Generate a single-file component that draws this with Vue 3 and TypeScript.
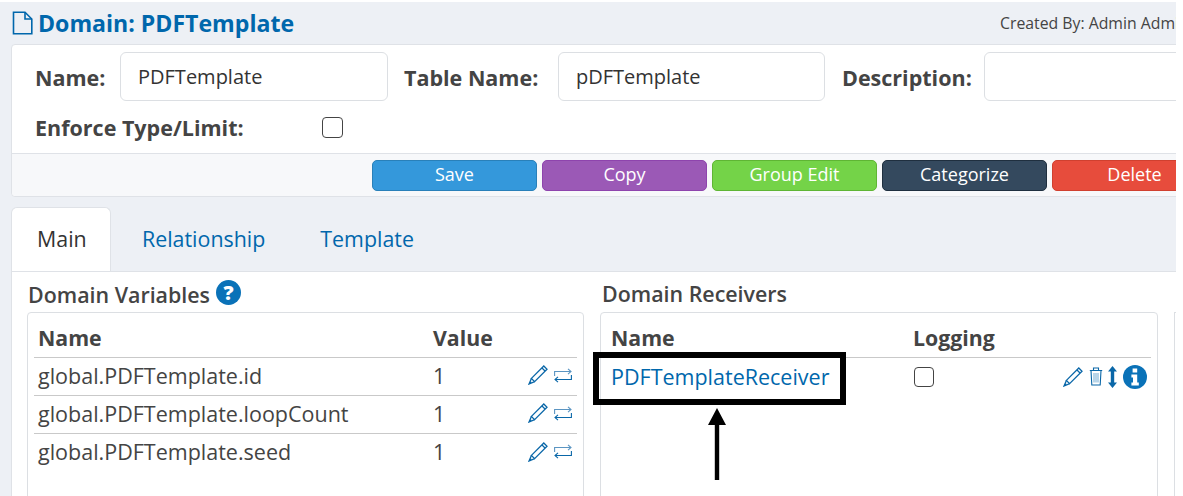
<script setup lang="ts">
const buttons = [
  { label: 'Save', cls: 'save' },
  { label: 'Copy', cls: 'copy' },
  { label: 'Group Edit', cls: 'group' },
  { label: 'Categorize', cls: 'cat' },
  { label: 'Delete', cls: 'del' },
]
const variables = ['global.PDFTemplate.id', 'global.PDFTemplate.loopCount', 'global.PDFTemplate.seed']
</script>

<template>
  <div class="viewport">
    <div class="page">
      <header class="head">
        <h1 class="title">
          <svg class="doc" width="21" height="24" viewBox="0 0 21 24" fill="none" stroke="#0067ac" stroke-width="1.6">
            <path d="M1.5 1.2H13L19.8 8V22.8H1.5Z" />
            <path d="M13 1.2V8H19.8" />
          </svg>
          Domain: PDFTemplate
        </h1>
        <div class="created">Created By: Admin Admin</div>
      </header>

      <section class="card">
        <div class="card-body">
          <div class="row">
            <label class="lbl lbl-name">Name:</label>
            <div class="input i1">PDFTemplate</div>
            <label class="lbl lbl-table">Table Name:</label>
            <div class="input i2">pDFTemplate</div>
            <label class="lbl lbl-desc">Description:</label>
            <div class="input i3"></div>
          </div>
          <div class="row2">
            <label class="lbl lbl-enforce">Enforce Type/Limit:</label>
            <span class="check"></span>
          </div>
        </div>
        <div class="card-foot">
          <button v-for="b in buttons" :key="b.label" class="btn" :class="b.cls">{{ b.label }}</button>
        </div>
      </section>

      <nav class="tabs">
        <a class="tab active">Main</a>
        <a class="tab">Relationship</a>
        <a class="tab">Template</a>
      </nav>

      <section class="pane">
        <div class="col col-l">
          <h2 class="sub">
            Domain Variables
            <span class="help">?</span>
          </h2>
          <div class="box">
            <div class="thead">
              <span class="c-name">Name</span>
              <span class="c-val">Value</span>
            </div>
            <div v-for="(v, i) in variables" :key="v" class="tr" :class="{ last: i === variables.length - 1 }">
              <span class="c-name">{{ v }}</span>
              <span class="c-val">1</span>
              <span class="acts">
                <svg width="20" height="20" viewBox="0 0 20 20" fill="none" stroke="#0a67a8" stroke-width="1.3">
                  <path d="M15.8 1 19 4.2 6.6 16.6 3.4 13.4Z" />
                  <path d="M3.4 13.4 1 19l5.6-2.4" />
                  <path d="M14 3 17 6" />
                  <path d="M2 17l1 1" stroke-width="2.2" />
                </svg>
                <svg width="18" height="15" viewBox="0 0 18 15" fill="none" stroke="#0a67a8" stroke-width="1.1">
                  <path d="M.6 8V3.5H17M14 .8 17 3.5 14 6.2" stroke="#5b95c2" />
                  <path d="M17.4 7V11.5H1M4 8.8 1 11.5 4 14.2" />
                </svg>
              </span>
            </div>
          </div>
        </div>

        <div class="col col-r">
          <h2 class="sub">Domain Receivers</h2>
          <div class="box box-r">
            <div class="thead">
              <span class="r-name">Name</span>
              <span class="r-log">Logging</span>
            </div>
            <div class="tr tr-r">
              <a class="r-name link">PDFTemplateReceiver</a>
              <span class="r-log"><span class="check small"></span></span>
              <span class="acts acts-r">
                <svg width="20" height="20" viewBox="0 0 20 20" fill="none" stroke="#0a67a8" stroke-width="1.3">
                  <path d="M15.8 1 19 4.2 6.6 16.6 3.4 13.4Z" />
                  <path d="M3.4 13.4 1 19l5.6-2.4" />
                  <path d="M14 3 17 6" />
                  <path d="M2 17l1 1" stroke-width="2.2" />
                </svg>
                <svg class="trash" width="14" height="19" viewBox="0 0 14 19" fill="none" stroke="#0a67a8" stroke-width="1.1">
                  <path d="M.8 3.5H13.2M4.5 3.5V1H9.5V3.5" />
                  <path d="M2 3.5 2.8 18H11.2L12 3.5" />
                  <path d="M5 6V15.5M7 6V15.5M9 6V15.5" stroke="#7fb2d6" />
                </svg>
                <svg width="9" height="22" viewBox="0 0 9 22">
                  <path d="M4.5 0 9 5.5H6.2V16.5H9L4.5 22 0 16.5H2.8V5.5H0Z" fill="#0a67a8" />
                </svg>
                <svg class="info" width="24" height="24" viewBox="0 0 24 24">
                  <circle cx="12" cy="12" r="12" fill="#0a72b8" />
                  <path d="M9.6 3.6h4.6v4H9.6ZM8.4 9.6h5.8v8h1.6v3H8.4v-3h1.6v-5H8.4Z" fill="#fff" />
                </svg>
              </span>
            </div>
          </div>
          <div class="callout"></div>
          <svg class="arrow" width="20" height="72" viewBox="0 0 20 72">
            <path d="M10 0 19 17H12.2V72H7.8V17H1Z" fill="#000" />
          </svg>
        </div>

        <div class="col-x"></div>
      </section>
    </div>
  </div>
</template>

<style>
html, body { margin: 0; background: #fff; }
</style>

<style scoped>
.viewport {
  width: 1183px;
  height: 496px;
  overflow: hidden;
  background: #fff;
  font-family: "Open Sans", "Noto Sans", sans-serif;
  color: #444;
}
.page {
  width: 1176px;
  height: 494px;
  margin-top: 2px;
  background: #edf0f5;
  overflow: hidden;
}
.head {
  display: flex;
  justify-content: space-between;
  height: 42px;
  padding-left: 12px;
  box-sizing: border-box;
  width: 1230px;
}
.title {
  margin: 0;
  display: flex;
  align-items: center;
  gap: 5px;
  height: 42px;
  font-size: 23.1px;
  font-weight: 700;
  color: #0067ac;
  white-space: nowrap;
}
.created {
  flex: none;
  width: 230px;
  font-size: 15.8px;
  line-height: 42px;
  color: #444;
  white-space: nowrap;
}
.card {
  margin-left: 11px;
  width: 1200px;
  height: 153px;
  box-sizing: border-box;
  background: #fff;
  border: 1px solid #dfe2e7;
  border-radius: 4px;
}
.card-body { height: 108px; padding: 7px 0 0 23px; box-sizing: border-box; }
.row { display: flex; align-items: center; height: 49px; }
.row2 { display: flex; align-items: center; height: 38px; margin-top: 7px; }
.lbl { font-size: 21.5px; font-weight: 700; color: #444; white-space: nowrap; flex: none; }
.row .lbl { padding-top: 2px; box-sizing: border-box; }
.lbl-name { width: 85px; }
.lbl-table { margin-left: 16px; width: 154px; }
.lbl-desc { margin-left: 17px; width: 142px; }
.lbl-enforce { width: 287px; }
.input {
  box-sizing: border-box;
  flex: none;
  height: 49px;
  border: 1px solid #dcdfe3;
  border-radius: 6px;
  background: #fff;
  font-size: 20px;
  line-height: 47px;
  padding-left: 17px;
  color: #333;
}
.i1 { width: 268px; }
.i2 { width: 267px; }
.i3 { width: 300px; }
.check {
  display: inline-block;
  box-sizing: border-box;
  width: 21px;
  height: 21px;
  border: 1.5px solid #444;
  border-radius: 4px;
  background: #fff;
}
.card-foot {
  height: 43px;
  box-sizing: border-box;
  background: #f7f8fa;
  border-top: 1px solid #dfe2e7;
  padding: 6px 0 0 360px;
  display: flex;
  gap: 5px;
  border-radius: 0 0 4px 4px;
}
.btn {
  box-sizing: border-box;
  flex: none;
  width: 165px;
  height: 31px;
  border-radius: 5px;
  border: 1px solid;
  padding: 0 0 3px;
  color: #fff;
  font-family: inherit;
  font-size: 18px;
  line-height: 26px;
}
.save { background: #3498db; border-color: #2980b9; }
.copy { background: #9b59b6; border-color: #8e44ad; }
.group { background: #74d348; border-color: #5fb534; }
.cat { background: #34495e; border-color: #1f2f3f; }
.del { background: #e74c3c; border-color: #d0402f; }
.tabs {
  display: flex;
  margin: 10px 0 0 11px;
  height: 64px;
}
.tab {
  box-sizing: border-box;
  height: 64px;
  padding: 0 25px;
  margin-right: 5px;
  font-size: 21.4px;
  line-height: 64px;
  color: #0067ac;
}
.tab.active {
  width: 100px;
  background: #fff;
  color: #333;
  border: 1px solid #dfe2e7;
  border-bottom: 0;
  border-radius: 6px 6px 0 0;
  line-height: 62px;
  margin-right: 6px;
}
.pane {
  margin-left: 11px;
  width: 1200px;
  height: 240px;
  box-sizing: border-box;
  background: #fff;
  border-top: 1px solid #dfe2e7;
  border-left: 1px solid #dfe2e7;
  display: flex;
  padding-left: 15px;
}
.col { position: relative; flex: none; }
.col-l { width: 557px; }
.col-r { width: 558px; margin-left: 16px; }
.col-x {
  flex: none;
  margin: 40px 0 0 16px;
  width: 20px;
  border: 1px solid #dcdfe3;
}
.sub {
  margin: 0;
  height: 40px;
  padding: 4px 0 0 1px;
  display: flex;
  align-items: center;
  gap: 6px;
  font-size: 21.4px;
  font-weight: 600;
  color: #444;
  box-sizing: border-box;
}
.col-r .sub { padding-left: 2px; padding-top: 3px; }
.help {
  flex: none;
  width: 25px;
  height: 25px;
  margin-top: -3px;
  border-radius: 50%;
  background: #0a72b8;
  color: #fff;
  font-size: 20px;
  font-weight: 800;
  line-height: 25px;
  text-align: center;
}
.box {
  box-sizing: border-box;
  height: 200px;
  border: 1px solid #dcdfe3;
  border-radius: 4px 4px 0 0;
  padding: 0 6px;
}
.thead {
  display: flex;
  align-items: center;
  height: 45px;
  padding-top: 4px;
  border-bottom: 1px solid #c9c9c9;
  font-size: 21.3px;
  font-weight: 700;
  color: #444;
  box-sizing: border-box;
}
.tr {
  display: flex;
  align-items: center;
  height: 38px;
  padding-bottom: 3px;
  border-bottom: 1px solid #c9c9c9;
  font-size: 21.5px;
  color: #444;
  box-sizing: border-box;
}
.tr.last, .tr-r { border-bottom: 0; }
.tr-r { height: 40px; }
.c-name { width: 399px; padding-left: 4px; box-sizing: border-box; white-space: nowrap; }
.c-val { width: 95px; }
.acts { display: flex; align-items: center; gap: 6px; }
.r-name { width: 306px; padding-left: 4px; box-sizing: border-box; white-space: nowrap; }
.r-log { width: 151px; display: flex; align-items: center; }
.link { color: #0067ac; }
.check.small { width: 20px; height: 20px; margin-left: 1px; }
.acts-r { gap: 5px; margin-left: -1px; }
.acts-r .trash { margin-left: 1px; }
.acts-r .info { margin-left: 1px; }
.callout {
  position: absolute;
  left: -7px;
  top: 80px;
  width: 253px;
  height: 53px;
  box-sizing: border-box;
  border: 6px solid #000;
}
.arrow {
  position: absolute;
  left: 107px;
  top: 136px;
}
</style>
